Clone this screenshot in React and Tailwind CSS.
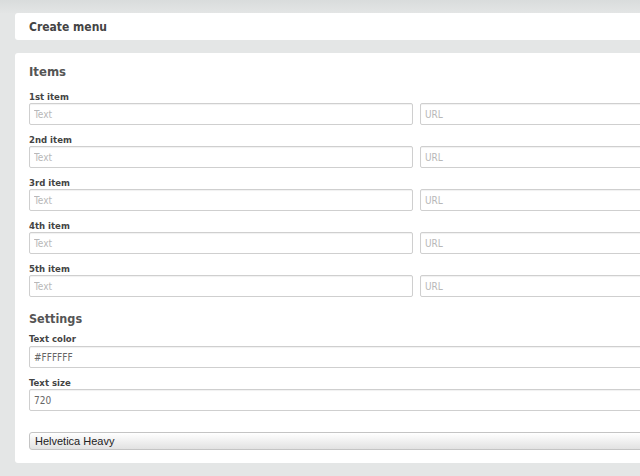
const items = ['1st item', '2nd item', '3rd item', '4th item', '5th item']

function Field({ placeholder, value, className = '' }) {
  return (
    <input
      readOnly
      placeholder={placeholder}
      value={value}
      className={`h-[22px] rounded-[2px] border border-[#cfcfcf] bg-white pl-[4px] text-[10px] text-[#666] shadow-[inset_0_1px_1px_rgba(0,0,0,0.06)] outline-none placeholder:text-[#b8b8b8] ${className}`}
    />
  )
}

export default function App() {
  return (
    <div className="h-[476px] w-[640px] overflow-hidden bg-[#e4e6e6] font-['DejaVu_Sans_Condensed','DejaVu_Sans',Verdana,sans-serif]">
      <div className="h-[13px] bg-gradient-to-b from-[#d9dcdc] to-[#e3e5e5]" />

      {/* Header */}
      <div className="ml-[15px] flex h-[27px] w-[800px] items-center rounded-l-[3px] bg-white pl-[14px]">
        <h1 className="text-[12px] font-bold text-[#444]">Create menu</h1>
      </div>

      {/* Main card */}
      <div className="ml-[15px] mt-[13px] w-[800px] rounded-l-[3px] bg-white pl-[14px] pt-[9px] pb-[13px]">
        <h2 className="h-[20px] text-[13px] font-bold leading-[20px] text-[#555]">Items</h2>

        <div className="mt-[8px] flex flex-col gap-[8px]">
          {items.map((label) => (
            <div key={label}>
              <p className="h-[12px] text-[9.5px] font-bold leading-[13px] text-[#444]">{label}</p>
              <div className="mt-[1px] flex gap-[7px]">
                <Field placeholder="Text" className="w-[384px]" />
                <Field placeholder="URL" className="w-[384px]" />
              </div>
            </div>
          ))}
        </div>

        <h2 className="mt-[12px] h-[20px] text-[12.5px] font-bold leading-[20px] text-[#555]">Settings</h2>

        <p className="mt-[3px] h-[12px] text-[9.5px] font-bold leading-[13px] text-[#444]">Text color</p>
        <Field value="#FFFFFF" className="mt-[2px] block w-[760px]" />

        <p className="mt-[8px] h-[12px] text-[9.5px] font-bold leading-[13px] text-[#444]">Text size</p>
        <Field value="720" className="mt-[1px] block w-[760px]" />

        <div className="mt-[21px] flex h-[18px] w-[760px] items-center rounded-[3px] border border-[#c4c4c4] bg-gradient-to-b from-white to-[#e2e2e2] pl-[5px] font-['Liberation_Sans',Arial,sans-serif] text-[11px] text-[#222]">
          Helvetica Heavy
        </div>
      </div>
    </div>
  )
}
